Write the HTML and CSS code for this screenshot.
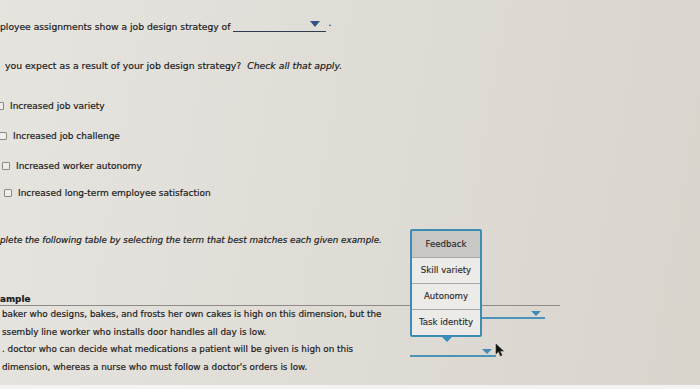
FILE: index.html
```html
<!DOCTYPE html>
<html>
<head>
<meta charset="utf-8">
<link rel="stylesheet" href="styles.css">
</head>
<body>
<div class="screen">
  <div class="page">
    <p class="q1">ployee assignments show a job design strategy of <span class="select select-dark"><span class="tri tri-dark"></span></span> <span class="dot">.</span></p>
    <p class="q2">you expect as a result of your job design strategy?&nbsp; <em>Check all that apply.</em></p>
    <ul class="options">
      <li class="opt opt-1"><span class="box"></span>Increased job variety</li>
      <li class="opt opt-2"><span class="box"></span>Increased job challenge</li>
      <li class="opt opt-3"><span class="box"></span>Increased worker autonomy</li>
      <li class="opt opt-4"><span class="box"></span>Increased long-term employee satisfaction</li>
    </ul>
    <p class="instr">plete the following table by selecting the term that best matches each given example.</p>
    <div class="table">
      <div class="thead">ample</div>
      <div class="trow">
        <div class="tcell">baker who designs, bakes, and frosts her own cakes is high on this dimension, but the<br>ssembly line worker who installs door handles all day is low.</div>
        <div class="tsel"><span class="select select-blue wide"><span class="tri tri-blue"></span></span></div>
      </div>
      <div class="trow">
        <div class="tcell">. doctor who can decide what medications a patient will be given is high on this<br>dimension, whereas a nurse who must follow a doctor's orders is low.</div>
        <div class="tsel"><span class="select select-blue narrow"><span class="tri tri-blue"></span></span></div>
      </div>
    </div>
  </div>
  <div class="popup">
    <div class="item active">Feedback</div>
    <div class="item">Skill variety</div>
    <div class="item">Autonomy</div>
    <div class="item">Task identity</div>
    <span class="pointer"></span>
  </div>
  <svg class="cursor" width="10" height="14" viewBox="0 0 10 14"><path d="M1 1 L1 11 L3.5 8.5 L5.5 13 L7 12.3 L5 8 L8.5 8 Z" fill="#111" stroke="#333" stroke-width="0.6"/></svg>
  <div class="bottom"></div>
</div>
</body>
</html>
```
FILE: styles.css
```css
html, body {
  margin: 0;
  padding: 0;
}
body {
  width: 700px;
  height: 389px;
  overflow: hidden;
  font-family: "DejaVu Sans", Verdana, sans-serif;
  color: #1c1c1c;
}
.screen {
  position: relative;
  width: 700px;
  height: 389px;
  background: linear-gradient(100deg, #e6e4df 0%, #e0ddd7 45%, #d9d5cd 100%);
  overflow: hidden;
  -webkit-text-stroke: 0.2px #1c1c1c;
}
.page {
  padding-top: 19px;
}
p { margin: 0; }
.q1 {
  font-size: 9.2px;
  line-height: 16px;
  height: 16px;
  display: flex;
  align-items: flex-end;
  white-space: pre;
}
.select {
  display: inline-block;
  position: relative;
  height: 12px;
  box-sizing: border-box;
}
.select-dark {
  width: 93px;
  border-bottom: 1.5px solid #2e3b52;
  margin-bottom: 3px;
}
.tri {
  position: absolute;
  right: 6px;
  top: 1px;
  width: 0;
  height: 0;
  border-left: 5px solid transparent;
  border-right: 5px solid transparent;
}
.tri-dark { border-top: 6px solid #2d5484; }
.dot { margin-left: 2px; position: relative; top: -4px; }
.q2 {
  margin-top: 23px;
  margin-left: 5px;
  font-size: 9.3px;
  line-height: 16px;
}
.q2 em { font-style: italic; }
.options {
  list-style: none;
  margin: 24px 0 0 0;
  padding: 0;
  font-size: 9px;
}
.opt {
  height: 16px;
  line-height: 16px;
  display: flex;
  align-items: center;
  margin-bottom: 14px;
}
.opt-3 { margin-bottom: 11px; }
.opt-4 { margin-bottom: 0; }
.box {
  width: 6px;
  height: 6px;
  border: 1px solid #8a8a88;
  background: #eeede9;
  border-radius: 1px;
  margin-right: 6px;
  flex: none;
  -webkit-text-stroke: 0;
}
.opt-1 { margin-left: -4px; }
.opt-2 { margin-left: -1px; }
.opt-3 { margin-left: 2px; }
.opt-4 { margin-left: 4px; }
.instr {
  margin-top: 31px;
  font-size: 8.8px;
  line-height: 16px;
  font-style: italic;
}
.table {
  margin-top: 45px;
  font-size: 8.8px;
}
.thead {
  width: 560px;
  line-height: 12px;
  font-weight: bold;
  border-bottom: 1px solid #8d8b87;
}
.trow {
  display: grid;
  grid-template-columns: 410px auto;
  line-height: 17.5px;
}
.tcell { padding-left: 2px; white-space: nowrap; }
.tsel { position: relative; }
.select-blue {
  border-bottom: 2px solid #4d93b9;
  height: 12px;
  margin-top: 1px;
}
.select-blue.wide { width: 135px; }
.select-blue.narrow { width: 86px; margin-top: 4px; }
.tri-blue { border-top: 5px solid #3f8bb6; top: 4px; right: 4px; }
.popup {
  position: absolute;
  left: 410px;
  top: 229px;
  width: 68px;
  border: 2px solid #3b8db6;
  border-radius: 2px;
  background: #ecebe8;
  font-size: 8.6px;
  color: #2a2a2a;
  -webkit-text-stroke: 0.15px #2a2a2a;
}
.item {
  height: 25px;
  line-height: 25px;
  text-align: center;
  border-top: 1px solid #a8a8a6;
  white-space: nowrap;
}
.item:first-child { border-top: none; height: 26px; line-height: 26px; }
.item.active { background: #c8c7c4; }
.pointer {
  position: absolute;
  left: 29px;
  bottom: -7px;
  width: 0;
  height: 0;
  border-left: 6px solid transparent;
  border-right: 6px solid transparent;
  border-top: 6px solid #3b8db6;
}
.cursor {
  position: absolute;
  left: 495px;
  top: 343px;
}
.bottom {
  position: absolute;
  left: 0;
  right: 0;
  bottom: 0;
  height: 4px;
  background: #f4f3f1;
}
```
